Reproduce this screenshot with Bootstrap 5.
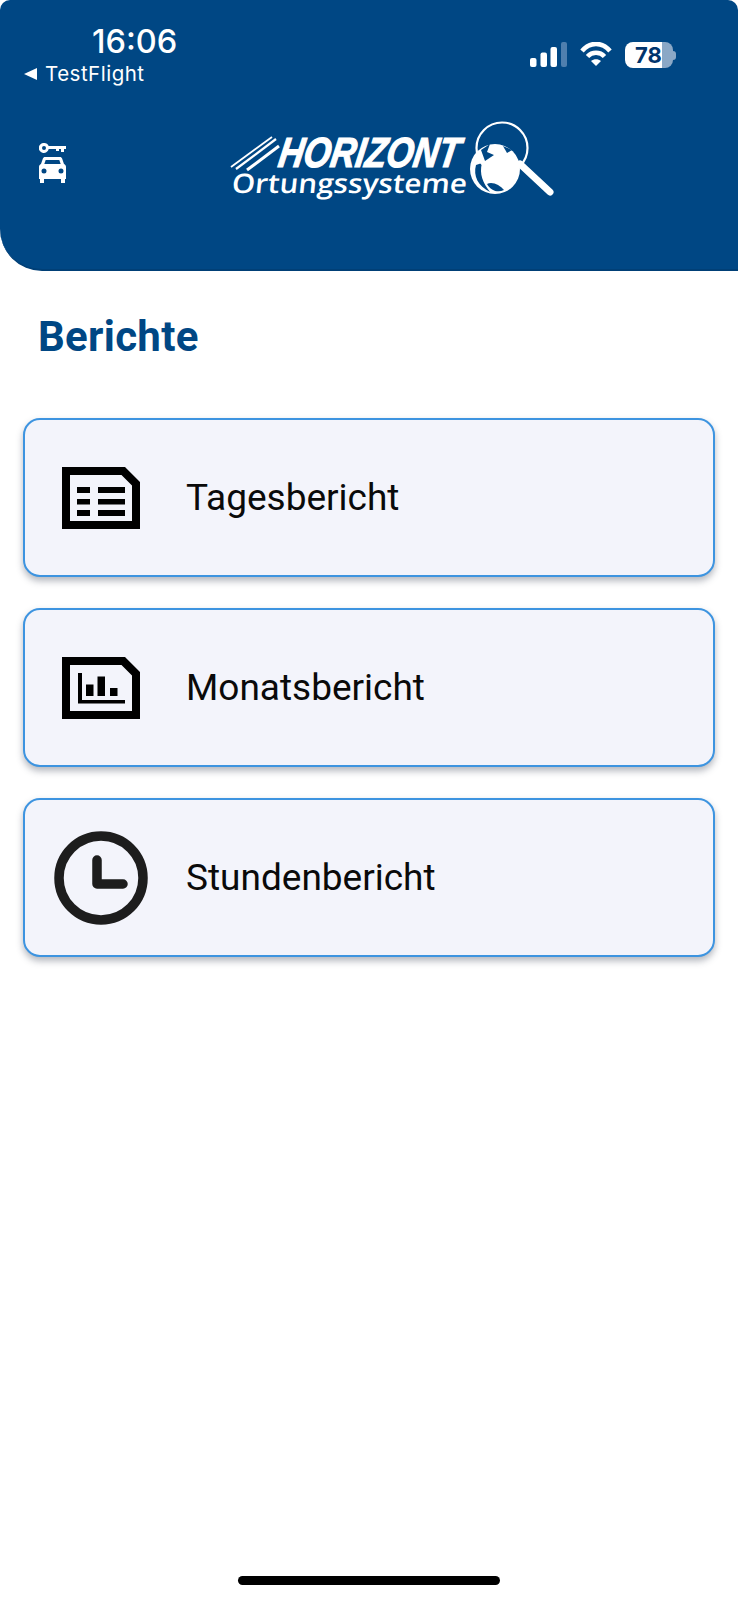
<!doctype html>
<html lang="de"><head><meta charset="utf-8"><title>Berichte</title>
<link rel="stylesheet" href="https://cdn.jsdelivr.net/npm/bootstrap@5.3.0/dist/css/bootstrap.min.css">
<style>
html,body{background:#fff;margin:0}
.app-page{width:738px;height:1600px;font-family:Roboto,sans-serif;overflow:hidden}
.app-head{height:271px;background:#004784;border-bottom:2px solid #003f76;border-radius:10px 10px 0 42px;color:#fff;flex:none}
.stat-row{height:122px;padding:25px 62px 0 24px}
.stat-time{font:500 32.500px/33px Inter,sans-serif;padding-left:68px}
.stat-back{font:400 20.500px/26px Inter,sans-serif;letter-spacing:.5px;margin-top:3px}
.back-tri{width:0;height:0;border:6.500px solid transparent;border-left:0;border-right:13px solid #fff}
.stat-icons{padding-top:17px;gap:13px}
.batt-body{width:48px;height:26px;border-radius:8px;background:linear-gradient(90deg,#fff 77%,#8ba8c6 77%);color:#00346c;font:700 22px/26px Inter,sans-serif;padding-left:10px}
.batt-nub{width:3px;height:9px;border-radius:0 3px 3px 0;background:#8ba8c6}
.logo-row{padding-left:39px}
.key-icon{margin-top:21px;flex:none}
.logo-gap{margin-left:159px;margin-top:-2px;flex:none}
.logo-h{font:italic 700 42px "Liberation Sans",sans-serif;fill:#fff;stroke:#fff;stroke-width:1.200px}
.logo-o{font:600 27px "Open Sans",sans-serif;fill:#fff}
.page-title{font:700 42px/48px Roboto,sans-serif;letter-spacing:.3px;color:#004784;margin:0;padding:42px 0 0 38px}
.rep-list{padding:57px 23px 0;gap:31px}
.rep-card{height:159px;background:#f3f4fb;border:2px solid #3d94e0;border-radius:17px;box-shadow:0 4px 7px rgba(40,50,70,.35);flex-direction:row;align-items:center}
.rep-slot{width:156px;margin-left:-2px;flex:none}
.rep-label{font:400 37px/44px Roboto,sans-serif;color:#0a0a0a;margin-left:7px}
.home-bar{width:262px;height:9px;background:#000;border-radius:5px;margin-bottom:15px}
</style></head>
<body>
<div class="app-page d-flex flex-column">
  <header class="app-head">
    <div class="stat-row d-flex justify-content-between">
      <div>
        <div class="stat-time">16:06</div>
        <div class="stat-back d-flex align-items-center gap-2"><span class="back-tri"></span><span>TestFlight</span></div>
      </div>
      <div class="stat-icons d-flex align-items-start">
        <svg width="37" height="25" viewBox="0 0 37 25" fill="#fff"><rect y="16" width="6.5" height="9" rx="2"/><rect x="10.500" y="10.500" width="6.500" height="14.500" rx="2"/><rect x="20.500" y="5" width="6.500" height="20" rx="2"/><rect x="31" y="0" width="6" height="25" rx="2" fill="#4f7fae"/></svg>
        <svg width="32" height="24" viewBox="0 0 32 24" fill="none" stroke="#fff" stroke-width="4.500"><path d="M2 9C10-.5 22-.5 30 9"/><path d="M7.500 14.500C12 9.500 20 9.500 24.500 14.500"/><path d="M16 24 11 19C14 16.500 18 16.500 21 19Z" fill="#fff" stroke="none"/></svg>
        <div class="d-flex align-items-center"><div class="batt-body">78</div><div class="batt-nub"></div></div>
      </div>
    </div>
    <div class="logo-row d-flex align-items-start">
      <svg class="key-icon" width="27" height="41" viewBox="0 0 27 41" fill="#fff" aria-label="Fahrzeug"><path fill-rule="evenodd" d="M5 0a5 5 0 0 1 4.700 3H27v3h-2v3h-3V6h-2v2h-3V6H9.700A5 5 0 1 1 5 0Zm0 3a2 2 0 1 0 0 4 2 2 0 0 0 0-4Z"/><path fill-rule="evenodd" d="M6 14h15c1 0 1.800.6 2.100 1.500L25 21c1.300.6 2 1.800 2 3v12h-1v4h-4v-4H5v4H1v-4H0V24c0-1.200.7-2.400 2-3l1.900-5.500C4.200 14.600 5 14 6 14Zm.7 3-1.400 4h16.400l-1.400-4ZM5 25.500a2.500 2.500 0 1 0 0 5 2.500 2.500 0 0 0 0-5Zm17 0a2.500 2.500 0 1 0 0 5 2.500 2.500 0 0 0 0-5Z"/></svg>
      <svg class="logo-gap" width="335" height="82" viewBox="225 120 335 82">
        <g stroke="#fff" fill="none"><path d="M231 167 272 137" stroke-width="1.800"/><path d="M236 169 276 139" stroke-width="2.200"/><path d="M247 170 279 146" stroke-width="3"/></g>
        <text class="logo-h" transform="translate(277 167) skewX(-9)" textLength="181" lengthAdjust="spacingAndGlyphs">HORIZONT</text>
        <text class="logo-o" transform="translate(231 193) skewX(-6)" textLength="235" lengthAdjust="spacingAndGlyphs">Ortungssysteme</text>
        <circle cx="495" cy="169" r="25" fill="#fff"/>
        <path d="M476 165C473 176 478 186 490 192C483 183 479 174 482 163Z" fill="#004784"/>
        <path d="M487 184C492 181 500 185 504 190C498 193 491 191 487 184Z" fill="#004784"/>
        <path d="M481 150 490 144 487 152 494 155 485 161Z" fill="#004784"/>
        <path d="M503 146 512 150 507 153Z" fill="#004784"/>
        <circle cx="502" cy="148" r="25.500" fill="none" stroke="#fff" stroke-width="2.200"/>
        <path d="M520 164 550 192" stroke="#fff" stroke-width="7" stroke-linecap="round"/>
      </svg>
    </div>
  </header>
  <h1 class="page-title">Berichte</h1>
  <div class="rep-list d-flex flex-column">
    <a class="rep-card card text-decoration-none">
      <div class="rep-slot d-flex justify-content-center">
        <svg width="78" height="62" viewBox="0 0 78 62"><path fill-rule="evenodd" d="M0 0H63L78 15V62H0ZM8 8V54H70V18.500L59.500 8Z"/><path d="M15 20H28V26H15ZM36 20H63V26H36ZM15 32H28V37.500H15ZM36 32H63V37.500H36ZM15 43H28V49H15ZM36 43H63V49H36Z"/></svg>
      </div>
      <span class="rep-label">Tagesbericht</span>
    </a>
    <a class="rep-card card text-decoration-none">
      <div class="rep-slot d-flex justify-content-center">
        <svg width="78" height="62" viewBox="0 0 78 62"><path fill-rule="evenodd" d="M0 0H63L78 15V62H0ZM8 8V54H70V18.500L59.500 8Z"/><path d="M16 16H20V43H63V46.500H16ZM24 27.500H31.500V39H24ZM35.500 19.500H43V39H35.500ZM48 31H55.500V39H48Z"/></svg>
      </div>
      <span class="rep-label">Monatsbericht</span>
    </a>
    <a class="rep-card card text-decoration-none">
      <div class="rep-slot d-flex justify-content-center">
        <svg width="96" height="96" viewBox="0 0 96 96" fill="none" stroke="#1d1d1d"><circle cx="48" cy="48" r="42" stroke-width="9.500"/><path d="M44 30V54H70" stroke-width="9.500" stroke-linecap="round" stroke-linejoin="round"/></svg>
      </div>
      <span class="rep-label">Stundenbericht</span>
    </a>
  </div>
  <div class="home-bar mt-auto mx-auto"></div>
</div>
<script src="https://cdn.jsdelivr.net/npm/bootstrap@5.3.0/dist/js/bootstrap.bundle.min.js"></script>
</body></html>
